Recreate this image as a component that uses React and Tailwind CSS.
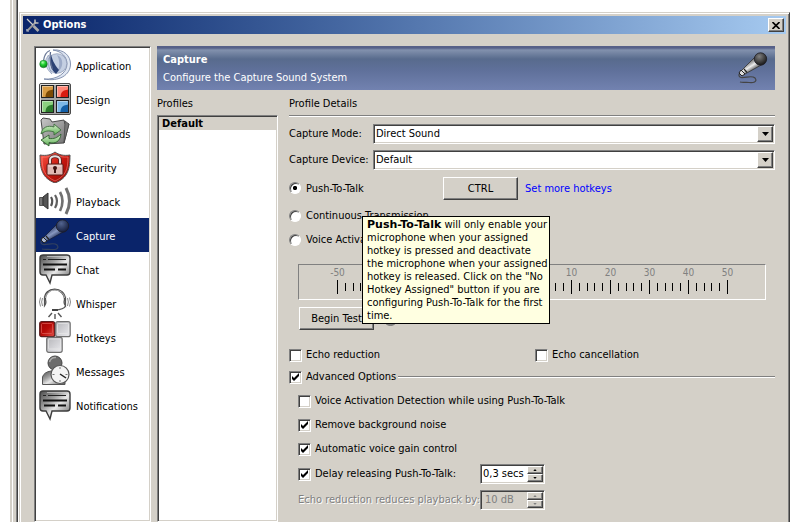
import { useState } from "react";

const SUNKEN =
  "border border-t-[#808080] border-l-[#808080] border-b-white border-r-white shadow-[inset_1px_1px_0_#404040,inset_-1px_-1px_0_#d4d0c8]";
const RAISED =
  "border border-t-white border-l-white border-b-[#404040] border-r-[#404040] bg-[#d4d0c8] shadow-[inset_-1px_-1px_0_#808080]";

function Defs() {
  return (
    <svg className="absolute size-0" aria-hidden="true">
      <defs>
        <linearGradient id="steel" x1="0" y1="0" x2="1" y2="1">
          <stop offset="0" stopColor="#4c4c4c" />
          <stop offset="0.35" stopColor="#a0a0a0" />
          <stop offset="0.55" stopColor="#e8e8e8" />
          <stop offset="1" stopColor="#585858" />
        </linearGradient>
        <linearGradient id="key" x1="0" y1="0" x2="1" y2="1">
          <stop offset="0" stopColor="#b4b4b8" />
          <stop offset="1" stopColor="#ececf0" />
        </linearGradient>
        <linearGradient id="redkey" x1="0" y1="0" x2="1" y2="1">
          <stop offset="0" stopColor="#a00000" />
          <stop offset="0.5" stopColor="#b80c08" />
          <stop offset="1" stopColor="#e05048" />
        </linearGradient>
        <linearGradient id="shield" x1="0" y1="0" x2="1" y2="1">
          <stop offset="0" stopColor="#ff5a48" />
          <stop offset="0.5" stopColor="#c81810" />
          <stop offset="1" stopColor="#8c0804" />
        </linearGradient>
        <linearGradient id="folder" x1="0" y1="0" x2="1" y2="1">
          <stop offset="0" stopColor="#c8c8c8" />
          <stop offset="1" stopColor="#6c6c6c" />
        </linearGradient>
        <linearGradient id="arrow" x1="0" y1="0" x2="0" y2="1">
          <stop offset="0" stopColor="#d8f4cc" />
          <stop offset="1" stopColor="#5cac54" />
        </linearGradient>
        <linearGradient id="barrel" gradientUnits="userSpaceOnUse" x1="10" y1="9" x2="17" y2="20">
          <stop offset="0" stopColor="#444" />
          <stop offset="0.5" stopColor="#eee" />
          <stop offset="1" stopColor="#222" />
        </linearGradient>
        <linearGradient id="barrelBlue" gradientUnits="userSpaceOnUse" x1="10" y1="9" x2="17" y2="20">
          <stop offset="0" stopColor="#25345f" />
          <stop offset="0.5" stopColor="#8898c0" />
          <stop offset="1" stopColor="#101c44" />
        </linearGradient>
        <radialGradient id="ball" cx="0.4" cy="0.3" r="0.8">
          <stop offset="0" stopColor="#808080" />
          <stop offset="0.8" stopColor="#222" />
        </radialGradient>
        <radialGradient id="ballBlue" cx="0.4" cy="0.3" r="0.8">
          <stop offset="0" stopColor="#53648f" />
          <stop offset="0.9" stopColor="#141d3c" />
        </radialGradient>
        <radialGradient id="green" cx="0.4" cy="0.3" r="0.8">
          <stop offset="0" stopColor="#b0ffb0" />
          <stop offset="0.4" stopColor="#20d030" />
          <stop offset="1" stopColor="#007010" />
        </radialGradient>
      </defs>
    </svg>
  );
}

function Icon({ children }) {
  return (
    <svg viewBox="0 0 32 32" className="size-8 shrink-0" fill="none" aria-hidden="true">
      {children}
    </svg>
  );
}

function ApplicationIcon() {
  return (
    <Icon>
      <path d="M14 1C25 0 31.500 7 31.500 15C31.500 26 20 33 5 30C18 31 28 24 28 15C28 8 23 2.500 14 1Z" fill="#dfe6f2" stroke="#7888a8" strokeWidth="0.900" />
      <circle cx="18" cy="14.500" r="9.800" fill="#c4cfe2" stroke="#8694b2" strokeWidth="0.700" />
      <path d="M18 6C25 8 25 20 18 23C21 18 21 11 18 6Z" fill="#9dabc8" />
      <path d="M12 5C13 10 15 15 20 21L17 25C14 22 11.500 19 11.500 14Z" fill="#2c4274" />
      <path d="M9.500 6C8.500 12 9 18 13 25C8 21 6 16 7 10Z" fill="#cfd8e8" stroke="#8090b0" strokeWidth="0.600" />
      <path d="M4.500 12C5 7 7 3 11 1.500" stroke="#6c7a98" strokeWidth="1.200" />
      <path d="M11.500 3C10.500 9 11.500 15 13.500 20" stroke="#5d6c90" strokeWidth="1.300" />
      <circle cx="4.500" cy="15" r="3.800" fill="url(#green)" stroke="#1c6c2c" strokeWidth="0.500" />
    </Icon>
  );
}

function DesignIcon() {
  return (
    <Icon>
      <rect x="0.500" y="0.500" width="31" height="31" rx="1.500" fill="#a4a4a4" stroke="#4a4a4a" />
      <path d="M1.500 30V1.500H30" stroke="#dcdcdc" />
      {[
        [2.5, 2.5, "#7c4a04", "#d89c44"],
        [17.5, 2.5, "#d81c10", "#ff8878"],
        [2.5, 17.5, "#2c7c2c", "#8cd080"],
        [17.5, 17.5, "#1460a8", "#7cb8e8"],
      ].map(([x, y, dark, light]) => (
        <g key={dark}>
          <rect x={x} y={y} width="12" height="12" fill={light} stroke="#222" />
          <path
            d={`M${x + 11.5} ${y + 4}V${y + 11.5}H${x + 4}C${x + 4} ${y + 6} ${x + 7} ${y + 5} ${x + 11.5} ${y + 4}Z`}
            fill={dark}
          />
          <path d={`M${x + 1} ${y + 11}V${y + 1}H${x + 11}`} stroke="#fff" strokeOpacity="0.4" />
        </g>
      ))}
    </Icon>
  );
}

function DownloadsIcon() {
  return (
    <Icon>
      <path d="M2 3L4 1L11 2L13 5L25 3L26 7L30 7L25 26L5 27Z" fill="url(#folder)" stroke="#4a4a4a" />
      <path d="M26 4L30 7L25 26Z" fill="#777" stroke="#444" strokeWidth="0.700" />
      <path d="M2 17C3 10 9 8 15 10L15 7L22 13L15 18L15 15C9 13 6 14 2 17Z" fill="url(#arrow)" stroke="#3c6c3c" strokeWidth="0.900" />
      <path d="M22 17C21 25 16 27 10 25.500L10 29L2 23L10 18L10 21.500C15 22 18 21 22 17Z" fill="url(#arrow)" stroke="#2c602c" strokeWidth="0.900" />
    </Icon>
  );
}

function SecurityIcon() {
  return (
    <Icon>
      <path d="M16 1C12 4 7 5 1 4C1 18 3 27 16 32C29 27 31 18 31 4C25 5 20 4 16 1Z" fill="url(#shield)" stroke="#555" />
      <path d="M16 3C12 5.500 8 6.500 3 6C3 18 5 25 16 30C27 25 29 18 29 6C24 6.500 20 5.500 16 3Z" stroke="#ff9c90" strokeOpacity="0.500" />
      <path d="M11 14V9C11 4 21 4 21 9V14" stroke="#4c2020" strokeWidth="3.500" />
      <path d="M11 14V9C11 4 21 4 21 9V14" stroke="#e8e0e0" strokeWidth="2" />
      <rect x="8" y="13" width="16" height="11" rx="1" fill="#e0b8b4" stroke="#5c1c18" />
      <path d="M9.500 15H22.500" stroke="#fff" strokeOpacity="0.600" />
      <circle cx="16" cy="17" r="2" fill="#3c1010" />
      <path d="M15 17H17V22H15Z" fill="#3c1010" />
    </Icon>
  );
}

function PlaybackIcon() {
  return (
    <Icon>
      <path d="M0.500 12.500H4V20.500H0.500Z" fill="#777" stroke="#555" />
      <path d="M4 12L9 8V24L4 20Z" fill="#555" stroke="#333" />
      <path d="M12 12Q14.500 16 12 21" stroke="#555" strokeWidth="2.200" />
      <path d="M16 10Q20 16 16 23" stroke="#606060" strokeWidth="2.200" />
      <path d="M21 7Q26 16 21 26" stroke="#707070" strokeWidth="2.600" />
      <path d="M27 3Q34 16 27 29" stroke="#707070" strokeWidth="3" />
    </Icon>
  );
}

function MicIcon({ blue }) {
  return (
    <Icon>
      <path
        d="M3 21C1 23 2 25 4 25.500C9 26 15 23 18 26C21 30 16 31 12 30.500C8 30 6 31 3 30"
        stroke={blue ? "#33425f" : "#444"}
        strokeWidth="1.200"
      />
      <path
        d="M19 4L26 12L8 22L4 19Z"
        fill={blue ? "url(#barrelBlue)" : "url(#barrel)"}
        stroke={blue ? "#141d3c" : "#333"}
        strokeWidth="0.800"
      />
      <path d="M4 18L8 22L5 24L2 21Z" fill={blue ? "#a9b5cf" : "#ddd"} stroke="#222" />
      <path d="M7 17L10 20.500" stroke="#222" strokeWidth="1.200" />
      <circle cx="23.500" cy="7" r="6.200" fill={blue ? "url(#ballBlue)" : "url(#ball)"} stroke="#1c1c24" strokeWidth="0.800" />
    </Icon>
  );
}

function ChatIcon() {
  return (
    <Icon>
      <path
        d="M4 2H28Q31 2 31 5V19Q31 22 28 22H13L11 30L7 22H4Q1 22 1 19V5Q1 2 4 2Z"
        fill="url(#steel)"
        stroke="#3c3c3c"
        strokeWidth="1.400"
      />
      <path d="M8 3.500H28" stroke="#ccc" strokeOpacity="0.700" />
      <path d="M4 6.500H7M9 6.500H27" stroke="#222" strokeWidth="1.200" />
      <path d="M4 11.500H28M5 16.500H16M19 16.500H27" stroke="#111" strokeWidth="1.800" />
    </Icon>
  );
}

function WhisperIcon() {
  return (
    <Icon>
      <path d="M6 13C5 -1 26 -1 26 13" stroke="#4c4c4c" strokeWidth="2.200" />
      <path d="M6.500 11C7 0.500 25 0.500 25.500 11" stroke="#ddd" strokeWidth="0.700" />
      <path d="M5.500 11Q8.500 15 5.500 19ZM26.500 11Q23.500 15 26.500 19Z" fill="#aaa" stroke="#555" strokeWidth="1.200" />
      <path
        d="M3.500 11Q1.800 15 3.500 19M1.500 10.500Q-0.500 15 1.500 19.500M28.500 11Q30.200 15 28.500 19M30.500 10.500Q32.500 15 30.500 19.500"
        stroke="#888"
      />
      <path d="M26.500 19Q25 22.500 16 23" stroke="#555" strokeWidth="1.200" />
      <path d="M13 23H19" stroke="#444" strokeWidth="2" />
      <path d="M13 26L9.500 30M16 27V32M19 26L22.500 30" stroke="#555" strokeWidth="1.400" />
    </Icon>
  );
}

function HotkeysIcon() {
  return (
    <Icon>
      <rect x="0.700" y="0.700" width="15" height="15" rx="2" fill="url(#redkey)" stroke="#5c1c1c" strokeWidth="1.200" />
      <rect x="2.500" y="2.500" width="11" height="10" rx="1" stroke="#e06058" strokeWidth="0.700" />
      <rect x="16.700" y="0.700" width="14.500" height="15" rx="2" fill="url(#key)" stroke="#707070" strokeWidth="1.200" />
      <rect x="18.500" y="2.500" width="11" height="10" rx="1" stroke="#e8e8e8" strokeWidth="0.700" />
      <rect x="7.700" y="16.300" width="15.500" height="15" rx="2" fill="url(#key)" stroke="#707070" strokeWidth="1.200" />
      <rect x="9.500" y="18" width="12" height="10" rx="1" stroke="#e8e8e8" strokeWidth="0.700" />
    </Icon>
  );
}

function MessagesIcon() {
  return (
    <Icon>
      <path d="M3.500 29.500V22Q5 17 12 16L26 18V29.500Z" fill="url(#steel)" stroke="#555" />
      <circle cx="16" cy="8" r="7" fill="#6c6c6c" stroke="#444" />
      <path d="M10.500 7Q12 2 17 2.500" stroke="#aaa" strokeWidth="1.500" />
      <circle cx="21" cy="19.500" r="9" fill="#f4f4f4" stroke="#555" strokeWidth="1.200" />
      <path d="M21 12V14M21 25V27M13.500 19.500H15.500M26.500 19.500H28.500" stroke="#777" />
      <path d="M21 19L27 23" stroke="#222" strokeWidth="1.500" />
    </Icon>
  );
}

const PAGES = [
  ["Application", ApplicationIcon],
  ["Design", DesignIcon],
  ["Downloads", DownloadsIcon],
  ["Security", SecurityIcon],
  ["Playback", PlaybackIcon],
  ["Capture", MicIcon],
  ["Chat", ChatIcon],
  ["Whisper", WhisperIcon],
  ["Hotkeys", HotkeysIcon],
  ["Messages", MessagesIcon],
  ["Notifications", ChatIcon],
];

function Sidebar() {
  return (
    <nav className={`w-[117px] shrink-0 bg-white p-px ${SUNKEN}`}>
      {PAGES.map(([name, Glyph]) => (
        <button
          key={name}
          type="button"
          className={
            name === "Capture"
              ? "flex h-[34px] w-full items-center gap-[5px] bg-[#0a246a] pl-[3px] text-left text-white"
              : "flex h-[34px] w-full items-center gap-[5px] pl-[3px] text-left"
          }
        >
          <Glyph blue={name === "Capture"} />
          <span className="pt-[3px]">{name}</span>
        </button>
      ))}
    </nav>
  );
}

function Check({ label, checked = false, className = "" }) {
  const [on, setOn] = useState(checked);
  return (
    <label className={`flex h-4 items-center gap-1 whitespace-nowrap ${className}`}>
      <span className="grid size-[13px] shrink-0">
        <input
          type="checkbox"
          checked={on}
          onChange={() => setOn(!on)}
          className={`size-[13px] appearance-none bg-white [grid-area:1/1] ${SUNKEN}`}
        />
        {on && (
          <svg viewBox="0 0 13 13" className="pointer-events-none z-10 size-[13px] [grid-area:1/1]">
            <path d="M3 5v3l2 2 5-5V2L5 7Z" fill="#000" />
          </svg>
        )}
      </span>
      {label}
    </label>
  );
}

function Radio({ label, value, mode, onPick, className = "" }) {
  return (
    <label className={`flex h-4 items-center gap-1 whitespace-nowrap ${className}`}>
      <span className="grid size-[13px] shrink-0">
        <input
          type="radio"
          name="activation"
          checked={mode === value}
          onChange={() => onPick(value)}
          className="size-3 appearance-none rounded-full border border-t-[#808080] border-r-white border-b-white border-l-[#808080] bg-white shadow-[inset_1px_1px_0_#404040] [grid-area:1/1]"
        />
        {mode === value && (
          <svg viewBox="0 0 12 12" className="pointer-events-none z-10 size-3 [grid-area:1/1]">
            <path d="M5 4h2l1 1v2l-1 1H5L4 7V5Z" fill="#000" />
          </svg>
        )}
      </span>
      {label}
    </label>
  );
}

function Dropdown({ id, label, value }) {
  return (
    <div className="flex h-5 items-center">
      <label htmlFor={id} className="w-[84px] shrink-0 whitespace-nowrap">
        {label}
      </label>
      <span className="relative flex h-5 min-w-0 flex-1">
        <select id={id} className={`h-5 w-full appearance-none bg-white pr-5 pl-[2px] ${SUNKEN}`}>
          <option>{value}</option>
        </select>
        <span className={`pointer-events-none absolute top-[2px] right-[2px] flex h-4 w-4 items-center justify-center ${RAISED}`}>
          <svg viewBox="0 0 7 4" className="h-1 w-[7px]">
            <path d="M0 0h7L3.500 4Z" fill="#000" />
          </svg>
        </span>
      </span>
    </div>
  );
}

function Spinner({ id, name, value, disabled = false }) {
  const ink = disabled ? "#808080" : "#000";
  return (
    <span className={`flex h-5 w-[65px] shrink-0 p-px ${disabled ? "bg-[#d4d0c8] text-[#808080]" : "bg-white"} ${SUNKEN}`}>
      <input
        id={id}
        type="text"
        aria-label={name}
        defaultValue={value}
        disabled={disabled}
        className={disabled ? "w-full min-w-0 pl-[3px]" : "w-full min-w-0 pl-px"}
      />
      <span className="flex w-4 shrink-0 flex-col">
        <button type="button" aria-label="Increase" disabled={disabled} className={`flex h-2 items-center justify-center ${RAISED}`}>
          <svg viewBox="0 0 5 3" className="h-[2px] w-[4px]">
            <path d="M0 3L2.500 0L5 3Z" fill={ink} />
          </svg>
        </button>
        <button type="button" aria-label="Decrease" disabled={disabled} className={`flex h-2 items-center justify-center ${RAISED}`}>
          <svg viewBox="0 0 5 3" className="h-[2px] w-[4px]">
            <path d="M0 0L2.500 3L5 0Z" fill={ink} />
          </svg>
        </button>
      </span>
    </span>
  );
}

function Meter() {
  const labels = [-50, -40, -30, -20, -10, 0, 10, 20, 30, 40, 50];
  const ticks = Array.from({ length: 51 }, (_, i) => i);
  return (
    <div className="mx-[9px] mt-4 h-9 overflow-hidden border border-t-[#808080] border-r-white border-b-white border-l-[#808080] pl-[19px]">
      <div className="flex h-[15px] w-[429px] items-center text-[10px] text-[#808080]">
        {labels.map((n) => (
          <span key={n} className="w-[39px] text-center">
            {n}
          </span>
        ))}
      </div>
      <svg width="429" height="14" viewBox="0 0 429 14" shapeRendering="crispEdges" aria-hidden="true">
        {ticks.map((i) => (
          <rect key={i} x={Math.round(19 + i * 7.8)} y={i % 5 ? 3 : 0} width="1" height={i % 5 ? 8 : 14} fill="#000" />
        ))}
      </svg>
    </div>
  );
}

function Groove({ className = "" }) {
  return <div className={`h-[2px] border-t border-b border-t-[#808080] border-b-white ${className}`} />;
}

function Tooltip() {
  return (
    <div
      role="tooltip"
      className="absolute top-[121px] left-[73px] z-20 w-[188px] border border-black bg-[#ffffe1] px-1 pt-px pb-px leading-[13px] whitespace-nowrap"
    >
      <strong className="font-['DejaVu_Sans',sans-serif] font-bold">Push-To-Talk</strong> will only enable your
      <br />
      microphone when your assigned
      <br />
      hotkey is pressed and deactivate
      <br />
      the microphone when your assigned
      <br />
      hotkey is released. Click on the "No
      <br />
      Hotkey Assigned" button if you are
      <br />
      configuring Push-To-Talk for the first
      <br />
      time.
    </div>
  );
}

function Details() {
  const [mode, setMode] = useState("ptt");
  return (
    <section className="relative min-w-0 flex-1">
      <h2 className="h-4 leading-[18px]">Profile Details</h2>
      <Groove className="mt-1" />
      <div className="mt-[7px] flex flex-col gap-[6px]">
        <Dropdown id="mode" label="Capture Mode:" value="Direct Sound" />
        <Dropdown id="device" label="Capture Device:" value="Default" />
      </div>
      <div className="mt-[7px] flex h-[23px] items-center">
        <Radio label="Push-To-Talk" value="ptt" mode={mode} onPick={setMode} className="w-[154px]" />
        <button type="button" className={`h-[23px] w-[75px] ${RAISED}`}>
          CTRL
        </button>
        <a href="#hotkeys" className="ml-[7px] text-[#0000ff]">
          Set more hotkeys
        </a>
      </div>
      <Radio label="Continuous Transmission" value="continuous" mode={mode} onPick={setMode} className="mt-2" />
      <Radio label="Voice Activation Detection" value="voice" mode={mode} onPick={setMode} className="mt-2" />
      <Meter />
      <div className="mt-[7px] ml-[10px] flex items-center gap-[9px]">
        <button type="button" className={`h-[23px] w-[75px] ${RAISED}`}>
          Begin Test
        </button>
        <svg viewBox="0 0 15 15" className="size-[15px]" aria-hidden="true">
          <circle cx="7.500" cy="7.500" r="7" fill="#888" stroke="#777" />
        </svg>
      </div>
      <div className="mt-[17px] flex">
        <Check label="Echo reduction" className="w-[246px]" />
        <Check label="Echo cancellation" />
      </div>
      <div className="mt-[6px] flex items-center gap-[2px]">
        <Check label="Advanced Options" checked />
        <Groove className="flex-1" />
      </div>
      <div className="mt-2 flex flex-col gap-2 pl-[9px]">
        <Check label="Voice Activation Detection while using Push-To-Talk" />
        <Check label="Remove background noise" checked />
        <Check label="Automatic voice gain control" checked />
      </div>
      <div className="mt-[7px] flex flex-col gap-[6px] pl-[9px]">
        <div className="flex h-5 items-center">
          <Check label="Delay releasing Push-To-Talk:" checked className="w-[182px]" />
          <Spinner id="delay" name="Release delay" value="0,3 secs" />
        </div>
        <div className="flex h-5 items-center">
          <label htmlFor="echo" className="w-[182px] whitespace-nowrap text-[#808080] text-shadow-[1px_1px_0_#fff]">
            Echo reduction reduces playback by:
          </label>
          <Spinner id="echo" value="10 dB" disabled />
        </div>
      </div>
      <Tooltip />
    </section>
  );
}

export default function App() {
  return (
    <div className="flex min-h-screen bg-white font-['DejaVu_Sans_Condensed','Noto_Sans',sans-serif] text-[11px] leading-4 text-black">
      <Defs />
      <div className="ml-[10px] w-[2px] shrink-0 bg-[#d4d0c8]" />
      <div className="ml-px w-[5px] shrink-0 border-r border-[#404040] bg-[#d4d0c8] shadow-[inset_-1px_0_0_#808080]" />
      <main className="mt-3 mr-[6px] ml-px flex min-w-0 flex-1 flex-col border-t border-r border-l border-t-[#d4d0c8] border-r-[#404040] border-l-[#d4d0c8] bg-[#d4d0c8] px-[3px] pt-[3px] shadow-[inset_1px_1px_0_#fff,inset_-1px_0_0_#808080]">
        <header className="flex h-[18px] items-center bg-linear-to-r from-[#0a246a] to-[#a6caf0] pr-[2px] pl-[3px] text-white">
          <svg viewBox="0 0 14 14" className="size-[14px]" fill="none" aria-hidden="true">
            <path d="M2 12L10 4" stroke="#999" strokeWidth="1.800" />
            <path d="M9 1.500L9 5L12.500 5" stroke="#bbb" strokeWidth="1.600" />
            <path d="M1 11L1 13L3 13" stroke="#ccc" strokeWidth="1.200" />
            <path d="M1 1L7 7" stroke="#ccc" strokeWidth="1.300" />
            <path d="M7.500 8L12.500 13" stroke="#aaa" strokeWidth="2.600" />
          </svg>
          <h1 className="ml-[3px] flex-1 font-bold">Options</h1>
          <button type="button" aria-label="Close" className={`flex h-[14px] w-4 items-center justify-center ${RAISED}`}>
            <svg viewBox="0 0 8 7" className="h-[7px] w-2">
              <path d="M0.500 0L7.500 7M7.500 0L0.500 7" stroke="#000" strokeWidth="1.600" />
            </svg>
          </button>
        </header>
        <div className="flex flex-1 gap-[6px] px-[11px] pt-3">
          <Sidebar />
          <div className="flex min-w-0 flex-1 flex-col">
            <div className="flex h-11 shrink-0 items-center bg-[linear-gradient(#566088_0,#566088_2px,#8291ad_4px,#586b8d_13px,#5f709a_24px,#7282b0_44px)] px-[6px] text-white">
              <div className="flex-1 pt-[2px]">
                <div className="h-[18px] font-bold">Capture</div>
                <p>Configure the Capture Sound System</p>
              </div>
              <MicIcon />
            </div>
            <div className="mt-[5px] flex flex-1 gap-[11px]">
              <section className="flex w-[121px] shrink-0 flex-col">
                <h2 className="h-4 leading-[18px]">Profiles</h2>
                <ul className={`mt-1 flex-1 bg-white p-px ${SUNKEN}`}>
                  <li className="h-[13px] bg-[#d4d0c8] pl-[3px] leading-[14px] font-bold">Default</li>
                </ul>
              </section>
              <Details />
            </div>
          </div>
        </div>
      </main>
    </div>
  );
}
